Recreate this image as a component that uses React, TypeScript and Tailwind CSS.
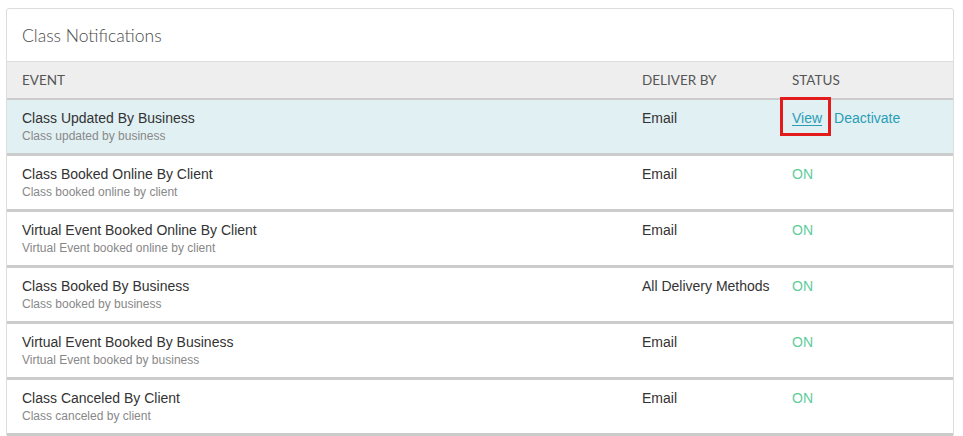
const rows = [
  { title: "Class Updated By Business", sub: "Class updated by business", deliver: "Email", active: true },
  { title: "Class Booked Online By Client", sub: "Class booked online by client", deliver: "Email" },
  { title: "Virtual Event Booked Online By Client", sub: "Virtual Event booked online by client", deliver: "Email" },
  { title: "Class Booked By Business", sub: "Class booked by business", deliver: "All Delivery Methods" },
  { title: "Virtual Event Booked By Business", sub: "Virtual Event booked by business", deliver: "Email" },
  { title: "Class Canceled By Client", sub: "Class canceled by client", deliver: "Email" },
];

export default function App() {
  return (
    <div className="min-h-screen bg-white pl-[6px] pt-[8px]">
      <div className="w-[948px] rounded-[3px] border border-[#dddddd] bg-white">
        {/* ── Title ── */}
        <div className="flex h-[52px] items-center px-[15px] pt-[2px] font-['Lato',sans-serif] text-[17.5px] font-light text-[#4a4a4a]">
          Class Notifications
        </div>

        {/* ── Table head ── */}
        <div className="grid h-[39px] grid-cols-[620px_150px_1fr] items-center border-t border-b-2 border-t-[#dddddd] border-b-[#cccccc] bg-[#eeeeee] px-[15px] pt-[1px] font-['Lato',sans-serif] text-[13.5px] uppercase text-[#555555]">
          <div>Event</div>
          <div>Deliver By</div>
          <div>Status</div>
        </div>

        {/* ── Rows ── */}
        {rows.map((r) => (
          <div
            key={r.title}
            className={`grid h-[56px] grid-cols-[620px_150px_1fr] border-b-[3px] border-[#cccccc] px-[15px] pt-[9px] font-['Liberation_Sans',Arial,sans-serif] ${
              r.active ? "bg-[#e1f0f3]" : "bg-white"
            }`}
          >
            <div>
              <div className="text-[14px] leading-[18px] text-[#333333]">{r.title}</div>
              <div className="mt-[1px] text-[12px] leading-[16px] text-[#888888]">{r.sub}</div>
            </div>
            <div className="text-[14px] leading-[18px] text-[#333333]">{r.deliver}</div>
            <div className="text-[14px] leading-[18px]">
              {r.active ? (
                <span className="flex gap-[12px]">
                  <span className="relative">
                    <a className="text-[#2a9db6] underline underline-offset-2">View</a>
                    <span className="pointer-events-none absolute -top-[12px] -bottom-[9px] -left-[12px] -right-[9px] border-[3px] border-[#e31b1b]" />
                  </span>
                  <a className="text-[#2a9db6]">Deactivate</a>
                </span>
              ) : (
                <span className="text-[#5fcc9c]">ON</span>
              )}
            </div>
          </div>
        ))}
      </div>
    </div>
  );
}
